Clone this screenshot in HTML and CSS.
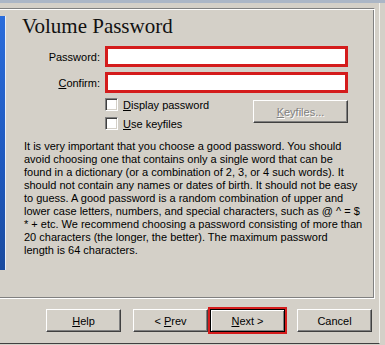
FILE: index.html
```html
<!DOCTYPE html>
<html lang="en">
<head>
    <meta charset="UTF-8">
    <title>Volume Password</title>
    <link rel="stylesheet" href="styles.css">
</head>
<body>
    <div class="window">
        <div class="title-strip"></div>
        <div class="dialog">
            <div class="frame">
                <div class="side-image"></div>
                <div class="page">
                    <h1 class="page-title">Volume Password</h1>

                    <div class="form-grid">
                        <label class="field-label">Password:</label>
                        <div class="text-field"></div>

                        <label class="field-label"><u>C</u>onfirm:</label>
                        <div class="text-field"></div>

                        <div></div>
                        <div class="options">
                            <ul class="check-list">
                                <li class="check-item"><span class="checkbox"></span><u>D</u>isplay password</li>
                                <li class="check-item"><span class="checkbox"></span><u>U</u>se keyfiles</li>
                            </ul>
                            <button class="win-button keyfiles-button" disabled><u>K</u>eyfiles...</button>
                        </div>
                    </div>

                    <p class="info-text">
                        It is very important that you choose a good password. You should<br>
                        avoid choosing one that contains only a single word that can be<br>
                        found in a dictionary (or a combination of 2, 3, or 4 such words). It<br>
                        should not contain any names or dates of birth. It should not be easy<br>
                        to guess. A good password is a random combination of upper and<br>
                        lower case letters, numbers, and special characters, such as @ ^ = $<br>
                        * + etc. We recommend choosing a password consisting of more than<br>
                        20 characters (the longer, the better). The maximum password<br>
                        length is 64 characters.
                    </p>
                </div>
            </div>

            <div class="button-row">
                <button class="win-button"><u>H</u>elp</button>
                <button class="win-button prev-button">&lt; <u>P</u>rev</button>
                <button class="win-button next-button"><u>N</u>ext &gt;</button>
                <button class="win-button cancel-button">Cancel</button>
            </div>
        </div>
    </div>
</body>
</html>
```

FILE: styles.css
```css
body {
    margin: 0;
    background: #d4d0c8;
    font-family: "Liberation Sans", Arial, sans-serif;
    font-size: 11px;
    color: #000;
}
.window {
    width: 385px;
    height: 345px;
    overflow: hidden;
}
.title-strip {
    height: 3px;
    background: #abb6c6;
}
.dialog {
    width: 380px;
    height: 341px;
    box-sizing: border-box;
    padding-top: 5px;
    border-right: 1px solid #f4f3ef;
    border-bottom: 1px solid #404040;
}
.frame {
    display: flex;
    width: 375px;
    height: 291px;
    box-sizing: border-box;
    border-top: 1px solid #808080;
    border-right: 1px solid #fff;
    border-bottom: 1px solid #fff;
    box-shadow: inset 0 1px 0 #fff, inset -1px 0 0 #808080, inset 0 -1px 0 #808080;
}
.side-image {
    width: 5px;
    height: 254px;
    margin-top: 7px;
    border-right: 1px solid #e8eef8;
    background: linear-gradient(#2a6cdb, #1d57bd 60%, #1a4b9f);
}
.page {
    flex: 1;
    padding-top: 5px;
}
.page-title {
    margin: 0 0 8px 16px;
    font-family: "Liberation Serif", "Times New Roman", serif;
    font-size: 21px;
    font-weight: normal;
    line-height: 24px;
    color: #111;
}
.form-grid {
    display: grid;
    grid-template-columns: 94px 243px;
    column-gap: 5px;
    row-gap: 5px;
    align-items: center;
}
.field-label {
    text-align: right;
    padding-top: 1px;
}
.text-field {
    height: 21px;
    box-sizing: border-box;
    border: 3px solid #d41c1c;
    background: #fff;
}
.options {
    display: flex;
    justify-content: space-between;
    align-items: flex-start;
    margin-top: -3px;
}
.check-list {
    list-style-type: none;
    margin: 0;
    padding: 0;
}
.check-item {
    display: flex;
    align-items: center;
    height: 19px;
}
.checkbox {
    width: 13px;
    height: 13px;
    box-sizing: border-box;
    margin-right: 5px;
    background: #fff;
    border-top: 1px solid #808080;
    border-left: 1px solid #808080;
    border-right: 1px solid #fff;
    border-bottom: 1px solid #fff;
    box-shadow: inset 1px 1px 0 #404040, inset -1px -1px 0 #d4d0c8;
}
.win-button {
    width: 75px;
    height: 23px;
    padding: 0;
    box-sizing: border-box;
    font-family: "Liberation Sans", Arial, sans-serif;
    font-size: 11px;
    color: #000;
    background: #d4d0c8;
    border-top: 1px solid #fff;
    border-left: 1px solid #fff;
    border-right: 1px solid #404040;
    border-bottom: 1px solid #404040;
    box-shadow: inset -1px -1px 0 #808080;
}
.keyfiles-button {
    width: 95px;
    margin-top: 5px;
    color: #808080;
    text-shadow: 1px 1px 0 #fff;
}
.info-text {
    margin: 7px 0 0 18px;
    line-height: 13px;
}
.button-row {
    display: flex;
    margin-top: 10px;
    padding-left: 46px;
}
.prev-button {
    margin-left: 12px;
}
.next-button {
    margin-left: 2px;
    border: 1px solid #000;
    box-shadow: inset 1px 1px 0 #fff, inset -1px -1px 0 #808080;
    outline: 2px solid #d41c1c;
}
.cancel-button {
    margin-left: 12px;
}
```
